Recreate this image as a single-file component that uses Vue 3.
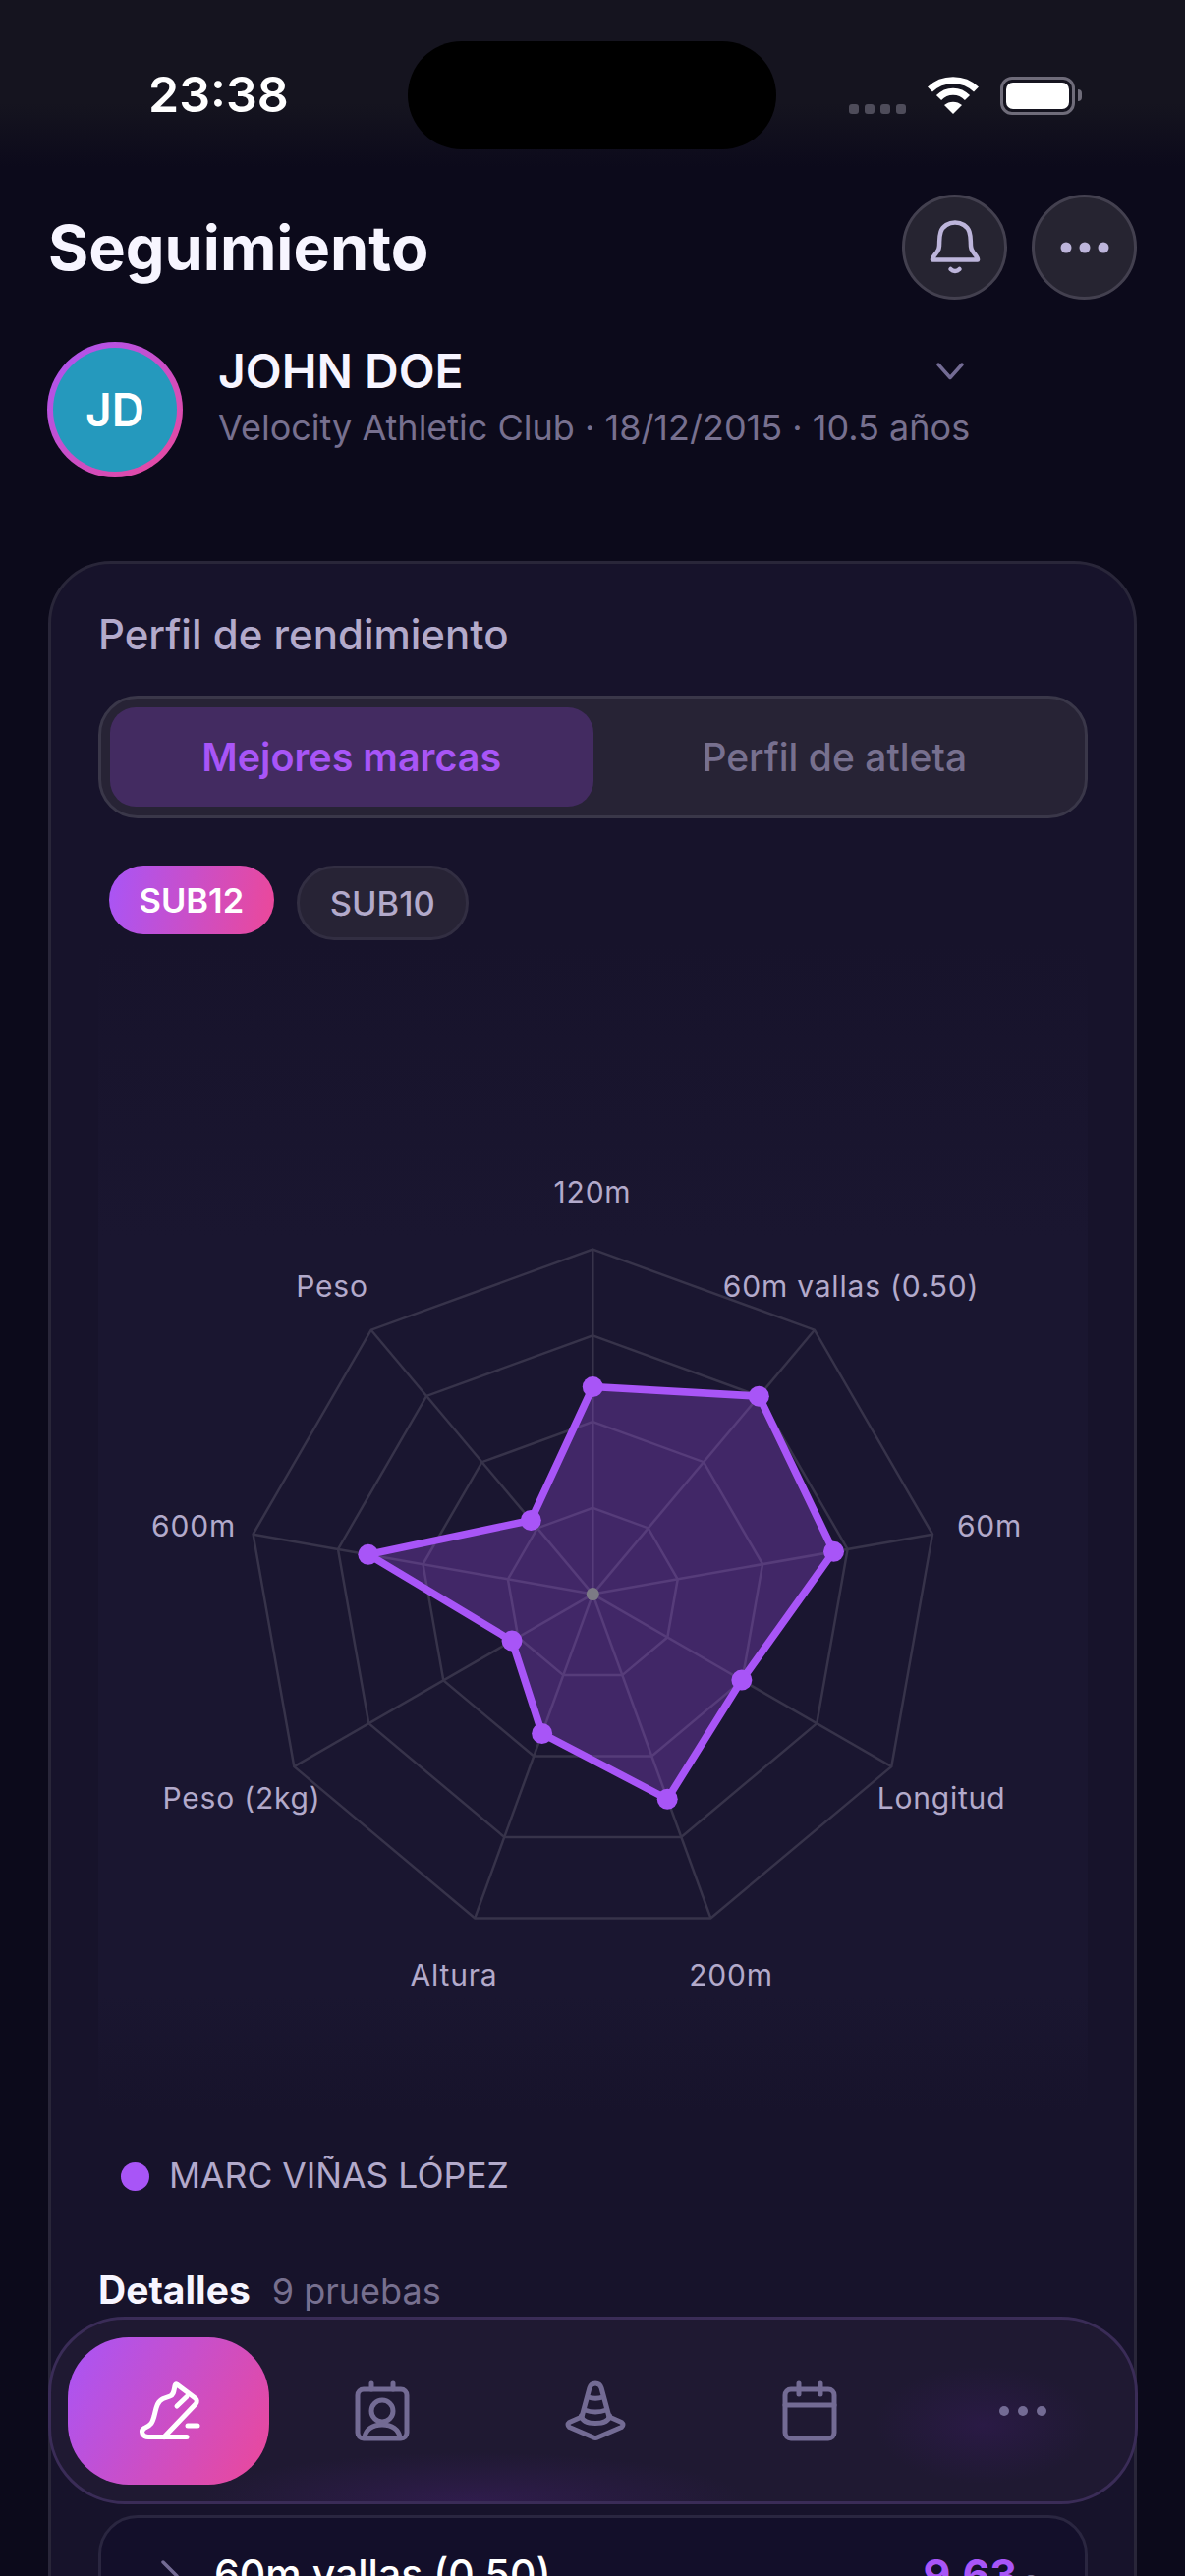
<script setup>
import { computed } from 'vue'

const cx = 503.3
const cy = 662.6
const R = 351
const N = 9
const pt = (i, r) => {
  const a = (i * 2 * Math.PI) / N - Math.PI / 2
  return [cx + r * Math.cos(a), cy + r * Math.sin(a)]
}
const toPts = (arr) => arr.map((p) => p[0].toFixed(1) + ',' + p[1].toFixed(1)).join(' ')

const rings = [0.25, 0.5, 0.75, 1].map((f) =>
  toPts(Array.from({ length: N }, (_, i) => pt(i, R * f)))
)
const axes = Array.from({ length: N }, (_, i) => pt(i, R))
const values = [211, 263, 249, 175, 222, 151, 95, 232, 98]
const dots = computed(() => values.map((v, i) => pt(i, v)))
const shape = computed(() => toPts(dots.value))

const labels = [
  { t: '120m', x: 503, y: 253 },
  { t: '60m vallas (0.50)', x: 766, y: 349 },
  { t: '60m', x: 907, y: 593 },
  { t: 'Longitud', x: 858, y: 870 },
  { t: '200m', x: 644, y: 1050 },
  { t: 'Altura', x: 362, y: 1050 },
  { t: 'Peso (2kg)', x: 146, y: 870 },
  { t: '600m', x: 97, y: 593 },
  { t: 'Peso', x: 238, y: 349 }
]
</script>

<template>
  <div class="screen">
    <div class="status">
      <span class="time">23:38</span>
      <div class="status-right">
        <div class="signal"><i></i><i></i><i></i><i></i></div>
        <svg class="wifi" width="52" height="38" viewBox="0 0 52 38">
          <path d="M2.5 13C15 .5 37 .5 49.500 13" fill="none" stroke="#fff" stroke-width="7" />
          <path d="M11.500 21.500C19.500 13 32.500 13 40.500 21.500" fill="none" stroke="#fff" stroke-width="7" />
          <path d="M17 29C22 24.500 30 24.500 35 29L26 38Z" fill="#fff" />
        </svg>
        <div class="battery"><div class="battery-fill"></div></div>
        <div class="battery-cap"></div>
      </div>
    </div>
    <div class="island"></div>

    <header class="head">
      <h1 class="title">Seguimiento</h1>
      <div class="head-actions">
        <button class="round">
          <svg width="52" height="56" viewBox="0 0 52 56" fill="none" stroke="#bdb5db" stroke-width="4.5" stroke-linecap="round" stroke-linejoin="round">
            <path d="M3 40.500H49C49.500 37 44 34 42.500 29C41 24 43 20 40.500 12C38.500 6 32.500 2.500 26 2.500C19.500 2.500 13.500 6 11.500 12C9 20 11 24 9.500 29C8 34 2.500 37 3 40.500Z" />
            <path d="M21.500 50C24 52.500 28 52.500 30.500 50" />
          </svg>
        </button>
        <button class="round">
          <svg width="52" height="14" viewBox="0 0 52 14" fill="#bdb5db">
            <circle cx="7" cy="7" r="5.500" /><circle cx="26" cy="7" r="5.500" /><circle cx="45" cy="7" r="5.500" />
          </svg>
        </button>
      </div>
    </header>

    <section class="profile">
      <div class="avatar"><span>JD</span></div>
      <div class="profile-text">
        <div class="name-row">
          <span class="name">JOHN DOE</span>
          <svg width="28" height="18" viewBox="0 0 28 18" fill="none" stroke="#736b94" stroke-width="3.500" stroke-linecap="round" stroke-linejoin="round">
            <path d="M2 2L14 15.500L26 2" />
          </svg>
        </div>
        <div class="sub">Velocity Athletic Club · 18/12/2015 · 10.5 años</div>
      </div>
    </section>

    <main class="card">
      <h2 class="card-title">Perfil de rendimiento</h2>

      <div class="segment">
        <div class="seg seg-active">Mejores marcas</div>
        <div class="seg">Perfil de atleta</div>
      </div>

      <div class="chips">
        <div class="chip chip-active">SUB12</div>
        <div class="chip">SUB10</div>
      </div>

      <div class="radar">
        <svg width="1006" height="1190" viewBox="0 0 1006 1190">
          <polygon v-for="(r, i) in rings" :key="i" :points="r" fill="none" stroke="#37334a" stroke-width="2.500" />
          <line v-for="(a, i) in axes" :key="'a' + i" :x1="cx" :y1="cy" :x2="a[0]" :y2="a[1]" stroke="#37334a" stroke-width="2.500" />
          <polygon :points="shape" fill="#a855f7" fill-opacity="0.28" stroke="#a855f7" stroke-width="7.500" stroke-linejoin="round" />
          <circle :cx="cx" :cy="cy" r="6.500" fill="#7c7a85" />
          <circle v-for="(d, i) in dots" :key="'d' + i" :cx="d[0]" :cy="d[1]" r="10.500" fill="#a855f7" />
          <text v-for="l in labels" :key="l.t" :x="l.x" :y="l.y" class="axis-label" text-anchor="middle">{{ l.t }}</text>
        </svg>
      </div>

      <div class="legend">
        <span class="legend-dot"></span>
        <span class="legend-text">MARC VIÑAS LÓPEZ</span>
      </div>

      <div class="details">
        <span class="details-title">Detalles</span>
        <span class="details-count">9 pruebas</span>
      </div>

      <div class="row-card">
        <svg class="row-chev" width="20" height="34" viewBox="0 0 20 34" fill="none" stroke="#736b94" stroke-width="3.500" stroke-linecap="round" stroke-linejoin="round">
          <path d="M3 3L17 17L3 31" />
        </svg>
        <span class="row-name">60m vallas (0.50)</span>
        <span class="row-value">9.63<small> s</small></span>
      </div>
    </main>

    <nav class="nav">
      <div class="nav-active">
        <svg width="60" height="60" viewBox="0 0 60 60" fill="none" stroke="#fff" stroke-width="5" stroke-linecap="round" stroke-linejoin="round">
          <path d="M48 56.500H9C3 56.500 0 50.500 5 47.500C12 44.500 13 42 15 35C17 27 18 20 24 17.500L31 15C35 13.500 35 9 36 4.500Q36.500 2 38 3L56 16.500Q60 19.500 57 23L25 56.500" />
          <path d="M38 25L48 15.500" />
          <path d="M49 45H59" />
        </svg>
      </div>
      <div class="nav-item">
        <svg width="56" height="60" viewBox="0 0 56 60" fill="none" stroke="#736b94" stroke-width="5" stroke-linecap="round" stroke-linejoin="round">
          <rect x="3" y="8" width="50" height="50" rx="6" />
          <path d="M17 2V8M39 2V8" />
          <circle cx="28" cy="30" r="11" />
          <path d="M10 57C11 49 18 44 28 44C38 44 45 49 46 57" />
        </svg>
      </div>
      <div class="nav-item">
        <svg width="60" height="60" viewBox="0 0 60 60" fill="none" stroke="#736b94" stroke-width="5" stroke-linecap="round" stroke-linejoin="round">
          <path d="M16 36L24 6.500Q25.500 2 30 2Q34.500 2 36 6.500L44 36L56.500 41.500Q59.500 44 56.500 46.500L32 57Q30 58 28 57L3.500 46.500Q.5 44 3.500 41.500Z" />
          <path d="M22.500 16Q30 18.500 37.500 16" />
          <path d="M19 29Q30 33 41 29" />
          <path d="M15.500 35Q17 42.500 30 42.500Q43 42.500 44.500 35" />
        </svg>
      </div>
      <div class="nav-item">
        <svg width="56" height="60" viewBox="0 0 56 60" fill="none" stroke="#736b94" stroke-width="5" stroke-linecap="round" stroke-linejoin="round">
          <rect x="3" y="8" width="50" height="50" rx="6" />
          <path d="M17 2V13M39 2V13" />
          <path d="M3 24H53" />
        </svg>
      </div>
      <div class="nav-item">
        <svg width="50" height="12" viewBox="0 0 50 12" fill="#736b94">
          <circle cx="6" cy="6" r="5" /><circle cx="25" cy="6" r="5" /><circle cx="44" cy="6" r="5" />
        </svg>
      </div>
    </nav>
  </div>
</template>

<style>
html, body { margin: 0; background: #0c0a1b; }
</style>

<style scoped>
.screen {
  position: relative;
  width: 1206px;
  height: 2622px;
  overflow: hidden;
  background: #0c0a1b;
  font-family: Inter, "Noto Sans", sans-serif;
  color: #fff;
}
.status {
  height: 170px;
  box-sizing: border-box;
  padding: 0 105px 0 151px;
  display: flex;
  justify-content: space-between;
  align-items: flex-start;
  background: linear-gradient(#15141f 0, #15141f 105px, #0c0a1b 170px);
}
.time {
  margin-top: 66px;
  font-size: 50px;
  line-height: 60px;
  font-weight: 600;
}
.status-right {
  display: flex;
  align-items: flex-start;
  margin-top: 78px;
}
.signal {
  display: flex;
  gap: 6px;
  margin-top: 28px;
  margin-right: 22px;
}
.signal i {
  width: 10px;
  height: 10px;
  border-radius: 3px;
  background: #4e4c5a;
}
.wifi { display: block; }
.battery {
  margin-left: 22px;
  width: 76px;
  height: 39px;
  box-sizing: border-box;
  border: 3.5px solid #6f6c7a;
  border-radius: 12px;
  padding: 3px;
}
.battery-fill {
  width: 100%;
  height: 100%;
  background: #fff;
  border-radius: 7px;
}
.battery-cap {
  width: 4px;
  height: 12px;
  margin: 13px 0 0 3px;
  background: #6f6c7a;
  border-radius: 0 4px 4px 0;
}
.island {
  position: absolute;
  left: 415px;
  top: 42px;
  width: 375px;
  height: 110px;
  border-radius: 55px;
  background: #000;
}
.head {
  margin-top: 28px;
  padding: 0 49px 0 49px;
  height: 107px;
  display: flex;
  justify-content: space-between;
  align-items: center;
}
.title {
  margin: 0;
  font-size: 63px;
  line-height: 72px;
  font-weight: 700;
  color: #f7f5ff;
}
.head-actions {
  display: flex;
  gap: 25px;
}
.round {
  width: 107px;
  height: 107px;
  box-sizing: border-box;
  padding: 0;
  border: 3px solid #43404f;
  border-radius: 50%;
  background: #262431;
  display: flex;
  align-items: center;
  justify-content: center;
}
.profile {
  margin-top: 43px;
  padding-left: 48px;
  display: flex;
  align-items: flex-start;
  gap: 36px;
}
.avatar {
  width: 138px;
  height: 138px;
  box-sizing: border-box;
  border-radius: 50%;
  padding: 6px;
  background: linear-gradient(135deg, #a855f7, #ec4899);
  display: flex;
  flex-shrink: 0;
}
.avatar span {
  flex: 1;
  border-radius: 50%;
  background: #2599bd;
  display: flex;
  align-items: center;
  justify-content: center;
  font-size: 46px;
  font-weight: 600;
}
.profile-text { margin-top: 3px; }
.name-row {
  width: 759px;
  display: flex;
  justify-content: space-between;
  align-items: center;
}
.name {
  font-size: 48px;
  line-height: 54px;
  font-weight: 600;
  color: #f7f5ff;
}
.sub {
  margin-top: 8px;
  font-size: 36px;
  line-height: 44px;
  color: #77708f;
  white-space: nowrap;
}
.card {
  margin: 85px 49px 0 49px;
  padding: 46px 47px 0 48px;
  border: 3px solid #292639;
  border-radius: 64px 64px 0 0;
  background: #17132b;
  height: 2100px;
  box-sizing: border-box;
}
.card-title {
  margin: 0;
  font-size: 42px;
  line-height: 52px;
  font-weight: 500;
  color: #b3aacb;
}
.segment {
  margin-top: 36px;
  height: 125px;
  box-sizing: border-box;
  border: 3px solid #3a3749;
  border-radius: 40px;
  background: #272335;
  padding: 9px;
  display: flex;
}
.seg {
  flex: 1;
  display: flex;
  align-items: center;
  justify-content: center;
  font-size: 39px;
  font-weight: 500;
  color: #77708f;
  border-radius: 26px;
}
.seg-active {
  background: #432b61;
  color: #a855f7;
  font-size: 39.5px;
  font-weight: 600;
}
.chips {
  margin-top: 48px;
  padding-left: 11px;
  display: flex;
  align-items: flex-start;
  gap: 23px;
}
.chip {
  height: 76px;
  box-sizing: border-box;
  padding: 0 31px;
  border: 3px solid #322e42;
  border-radius: 38px;
  background: #272335;
  color: #b3aacb;
  font-size: 34.5px;
  font-weight: 500;
  display: flex;
  align-items: center;
}
.chip-active {
  height: 70px;
  padding: 0 30.5px;
  border: 0;
  background: linear-gradient(100deg, #a855f7, #ec4899);
  color: #fff;
  font-weight: 600;
}
.radar {
  margin-top: 3px;
  height: 1190px;
  background: linear-gradient(rgba(26, 22, 48, 0) 0, #1a1630 25%, #1a1630 90%, rgba(26, 22, 48, 0) 100%);
}
.radar svg { display: block; }
.axis-label {
  font-family: Inter, "Noto Sans", sans-serif;
  font-size: 30px;
  fill: #b3aacb;
  letter-spacing: 0.8px;
  dominant-baseline: central;
}
.legend {
  margin-top: 40px;
  padding-left: 23px;
  display: flex;
  align-items: center;
  gap: 20px;
}
.legend-dot {
  width: 29px;
  height: 29px;
  border-radius: 50%;
  background: #a855f7;
}
.legend-text {
  font-size: 35.5px;
  line-height: 50px;
  color: #b3aacb;
}
.details {
  margin-top: 66px;
  display: flex;
  align-items: baseline;
  gap: 22px;
}
.details-title {
  font-size: 39px;
  line-height: 50px;
  font-weight: 700;
  color: #f7f5ff;
}
.details-count {
  font-size: 36px;
  color: #77708f;
}
.row-card {
  margin-top: 204px;
  height: 140px;
  box-sizing: border-box;
  border: 3px solid #2a2640;
  border-radius: 40px;
  background: #130f2a;
  padding: 31px 48px 0 60px;
  display: flex;
  align-items: flex-start;
}
.row-chev {
  margin-top: 11px;
  margin-right: 35px;
}
.row-name {
  flex: 1;
  font-size: 41px;
  line-height: 52px;
  font-weight: 500;
}
.row-value {
  font-size: 43px;
  line-height: 52px;
  font-weight: 700;
  color: #a855f7;
}
.row-value small {
  font-size: 26px;
  font-weight: 500;
  color: #77708f;
}
.nav {
  position: absolute;
  left: 49px;
  top: 2358px;
  width: 1108.5px;
  height: 191px;
  box-sizing: border-box;
  padding: 0 0 0 17px;
  border: 3px solid #3a2c57;
  border-radius: 78px;
  background:
    radial-gradient(ellipse 280px 50px at 39% 100%, #2f1c4c 0, rgba(47, 28, 76, 0) 100%),
    radial-gradient(ellipse 110px 60px at 86% 58%, #2a1a45 0, rgba(42, 26, 69, 0) 100%),
    #1f1932;
  display: flex;
  align-items: center;
}
.nav svg { overflow: visible; }
.nav-active {
  width: 205px;
  height: 150px;
  margin-right: 6px;
  border-radius: 62px;
  background: linear-gradient(120deg, #a855f7, #ec4899);
  display: flex;
  align-items: center;
  justify-content: center;
  flex-shrink: 0;
}
.nav-item {
  width: 217.5px;
  height: 150px;
  display: flex;
  align-items: center;
  justify-content: center;
}
</style>
